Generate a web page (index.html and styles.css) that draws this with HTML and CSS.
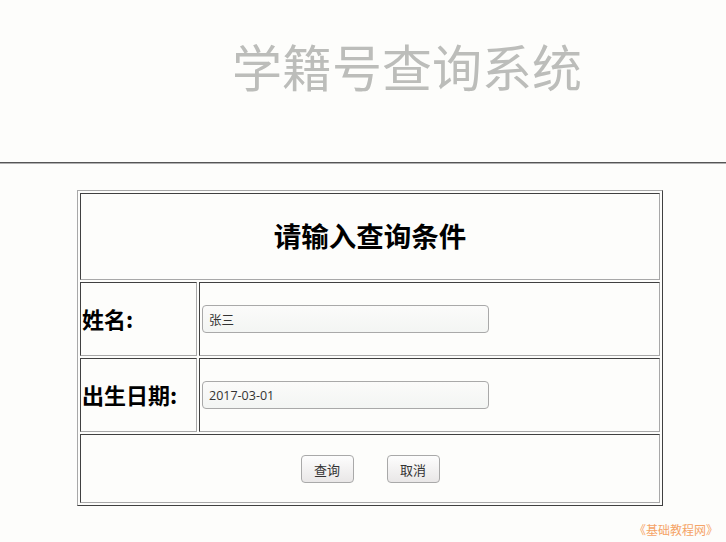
FILE: index.html
```html
<!DOCTYPE html>
<html lang="zh-CN">
<head>
    <meta charset="UTF-8">
    <title>学籍号查询系统</title>
    <link rel="stylesheet" href="styles.css">
</head>
<body>
    <div class="header">
        <h1>学籍号查询系统</h1>
    </div>
    <hr class="line">

    <form action="/query" method="post">
        <table class="query-table">
            <tr class="row-title">
                <td colspan="2"><h2>请输入查询条件</h2></td>
            </tr>
            <tr class="row-field">
                <td class="label">姓名:</td>
                <td class="field"><input type="text" name="name" value="张三"></td>
            </tr>
            <tr class="row-field">
                <td class="label">出生日期:</td>
                <td class="field"><input type="text" name="birthday" value="2017-03-01"></td>
            </tr>
            <tr class="row-buttons">
                <td colspan="2">
                    <div class="buttons">
                        <button type="submit">查询</button>
                        <button type="reset">取消</button>
                    </div>
                </td>
            </tr>
        </table>
    </form>

    <div class="watermark">《基础教程网》</div>
</body>
</html>
```

FILE: styles.css
```css
body {
    margin: 0;
    padding: 0;
    background-color: #fdfdfb;
    font-family: "Noto Sans CJK SC", "Noto Sans", sans-serif;
    color: #000;
}

.header {
    height: 162px;
    padding-left: 232px;
}

h1 {
    margin: 0;
    padding-top: 40px;
    font-size: 50px;
    line-height: 50px;
    font-weight: normal;
    color: #bcbdba;
}

.line {
    margin: 0;
    height: 0;
    border: none;
    border-top: 1px solid #555;
    border-bottom: 1px solid #b0b0b0;
}

form {
    margin: 26px 0 0 77px;
}

.query-table {
    width: 586px;
    border-collapse: separate;
    border-spacing: 2px;
    border: 1px solid;
    border-color: #a8a8a8 #404040 #404040 #a8a8a8;
}

.query-table td {
    box-sizing: border-box;
    padding: 1px;
    border: 1px solid;
    border-color: #404040 #a8a8a8 #a8a8a8 #404040;
    vertical-align: middle;
}

.row-title td {
    height: 87px;
    text-align: center;
}

h2 {
    margin: 0;
    padding-bottom: 3px;
    font-size: 27.5px;
    font-weight: bold;
}

.row-field td {
    height: 74px;
}

.row-field .label {
    width: 117px;
    padding-bottom: 4px;
    font-size: 22px;
    font-weight: bold;
}

.field input {
    box-sizing: border-box;
    width: 287px;
    height: 28px;
    margin-left: 1px;
    padding: 0 6px;
    border: 1px solid #a9a9a9;
    border-radius: 4px;
    background: linear-gradient(#fbfbfa, #f3f5f3);
    font-family: "Open Sans", "Noto Sans CJK SC", sans-serif;
    font-size: 12.5px;
    color: #333;
    outline: none;
}

.row-buttons td {
    height: 69px;
}

.buttons {
    display: flex;
    justify-content: center;
    gap: 33px;
    padding-top: 1px;
}

button {
    box-sizing: border-box;
    width: 53px;
    height: 28px;
    padding: 0;
    border: 1px solid #a9a9a9;
    border-radius: 4px;
    background: linear-gradient(#fdfdfd, #e9e7e7);
    font-family: "Noto Sans CJK SC", sans-serif;
    font-size: 13px;
    color: #333;
    cursor: pointer;
}

.watermark {
    position: absolute;
    right: 8px;
    bottom: 4px;
    font-family: "Noto Sans CJK SC", sans-serif;
    font-size: 12px;
    color: #f5a467;
}
```
